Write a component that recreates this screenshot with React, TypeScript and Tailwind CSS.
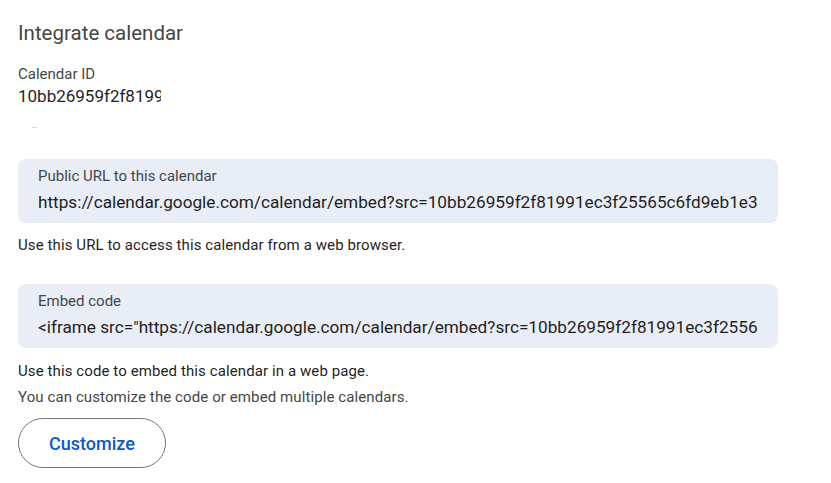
export default function App() {
  const font = { fontFamily: "Roboto, 'Noto Sans', Arial, sans-serif" };
  return (
    <div className="w-[831px] h-[483px] bg-white overflow-hidden" style={font}>
      <div className="flex flex-col pl-[18px] pt-[19px] w-[778px]">
        <div className="text-[20.5px] leading-[28px] text-[#444746]">Integrate calendar</div>
        <div className="mt-[17px] text-[15px] leading-[20px] text-[#444746]">Calendar ID</div>
        <div className="w-[143px] overflow-hidden whitespace-nowrap text-[17px] leading-[24px] text-[#1f1f1f]">
          10bb26959f2f81991ec3f25565c6fd9eb1e3
        </div>
        <div className="mt-[19px] ml-[14px] w-[5px] h-px bg-[#d8d8d8]"></div>
        <div className="mt-[31px] rounded-[8px] bg-[#e9edf6] pl-[20px] pr-[20px] pt-[7px] pb-[9px]">
          <div className="text-[15px] leading-[20px] text-[#444746]">Public URL to this calendar</div>
          <div className="mt-[4px] overflow-hidden whitespace-nowrap text-[17.2px] leading-[24px] text-[#1f1f1f]">
            https://calendar.google.com/calendar/embed?src=10bb26959f2f81991ec3f25565c6fd9eb1e3a1c2b%40group.calendar.google.com
          </div>
        </div>
        <div className="mt-[12px] text-[15px] leading-[20px] tracking-[0.1px] text-[#1f1f1f]">Use this URL to access this calendar from a web browser.</div>
        <div className="mt-[29px] rounded-[8px] bg-[#e9edf6] pl-[20px] pr-[20px] pt-[7px] pb-[9px]">
          <div className="text-[15px] leading-[20px] text-[#444746]">Embed code</div>
          <div className="mt-[4px] overflow-hidden whitespace-nowrap text-[17.2px] leading-[24px] text-[#1f1f1f]">
            {'<iframe src="https://calendar.google.com/calendar/embed?src=10bb26959f2f81991ec3f25565c6fd9eb1e3a1c2b%40group.calendar.google.com&ctz=UTC" style="border: 0" width="800" height="600" frameborder="0" scrolling="no"></iframe>'}
          </div>
        </div>
        <div className="mt-[13px] text-[15px] leading-[20px] tracking-[0.1px] text-[#1f1f1f]">Use this code to embed this calendar in a web page.</div>
        <div className="mt-[6px] text-[15px] leading-[20px] tracking-[0.1px] text-[#444746]">You can customize the code or embed multiple calendars.</div>
        <div className="mt-[11px]">
          <button className="w-[148px] h-[50px] rounded-full border border-[#747775] bg-white text-[18px] font-medium text-[#0b57d0]" style={font}>
            Customize
          </button>
        </div>
      </div>
    </div>
  );
}
